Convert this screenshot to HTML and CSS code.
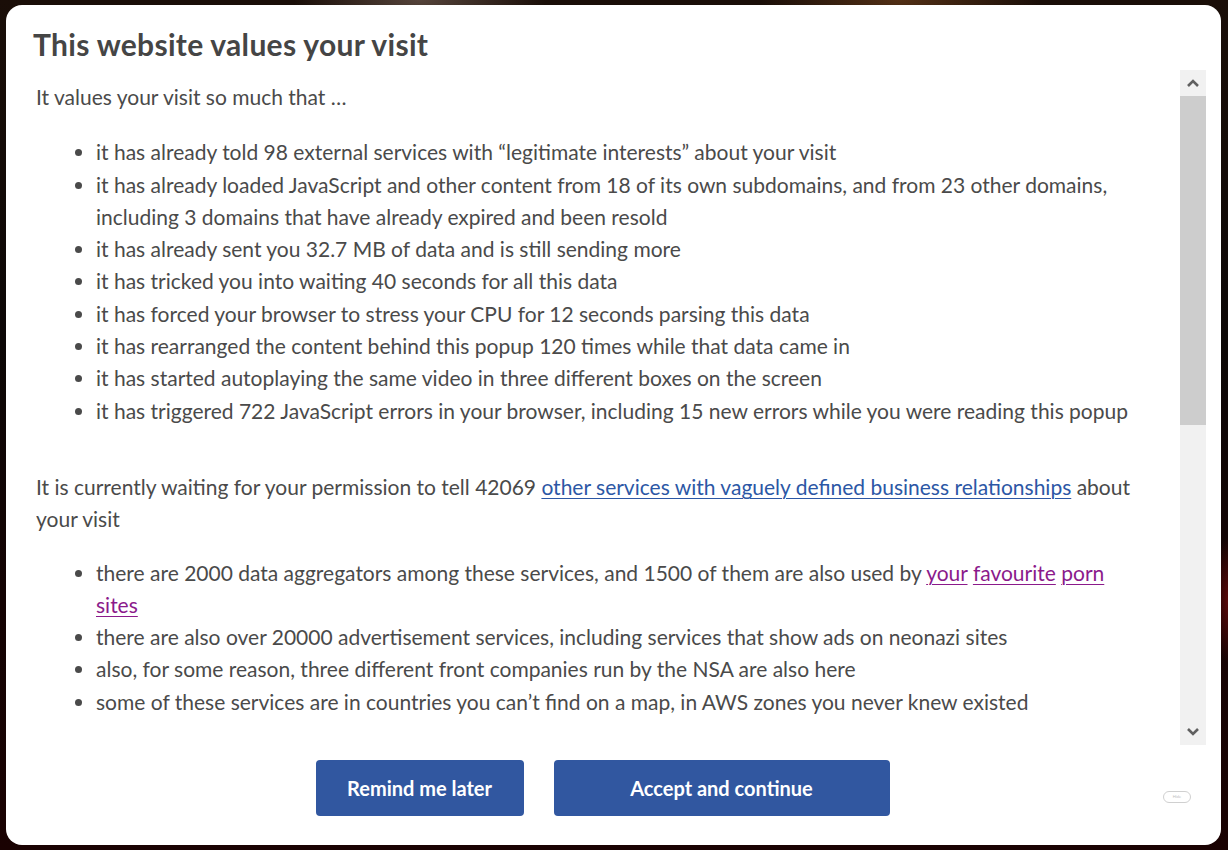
FILE: index.html
```html
<!DOCTYPE html>
<html lang="en">
<head>
<meta charset="utf-8">
<title>This website values your visit</title>
<link rel="stylesheet" href="styles.css">
</head>
<body>
<div class="backdrop">
  <div class="modal">
    <h2 class="title">This website values your visit</h2>
    <div class="body">
      <div class="scroll">
        <p class="lead">It values your visit so much that …</p>
        <ul class="list">
          <li>it has already told 98 external services with “legitimate interests” about your visit</li>
          <li>it has already loaded JavaScript and other content from 18 of its own subdomains, and from 23 other domains, including 3 domains that have already expired and been resold</li>
          <li>it has already sent you 32.7 MB of data and is still sending more</li>
          <li>it has tricked you into waiting 40 seconds for all this data</li>
          <li>it has forced your browser to stress your CPU for 12 seconds parsing this data</li>
          <li>it has rearranged the content behind this popup 120 times while that data came in</li>
          <li>it has started autoplaying the same video in three different boxes on the screen</li>
          <li>it has triggered 722 JavaScript errors in your browser, including 15 new errors while you were reading this popup</li>
        </ul>
        <p class="para">It is currently waiting for your permission to tell 42069 <a class="link" href="#">other services with vaguely defined business relationships</a> about your visit</p>
        <ul class="list list-second">
          <li>there are 2000 data aggregators among these services, and 1500 of them are also used by <a class="link visited" href="#">your</a> <a class="link visited" href="#">favourite</a> <a class="link visited" href="#">porn sites</a></li>
          <li>there are also over 20000 advertisement services, including services that show ads on neonazi sites</li>
          <li>also, for some reason, three different front companies run by the NSA are also here</li>
          <li>some of these services are in countries you can’t find on a map, in AWS zones you never knew existed</li>
        </ul>
      </div>
      <div class="scrollbar">
        <div class="sb-btn">
          <svg width="12" height="8" viewBox="0 0 12 8"><path d="M1 7 L6 2 L11 7" fill="none" stroke="#606060" stroke-width="2.6"/></svg>
        </div>
        <div class="sb-track">
          <div class="sb-thumb"></div>
        </div>
        <div class="sb-btn">
          <svg width="12" height="8" viewBox="0 0 12 8"><path d="M1 1 L6 6 L11 1" fill="none" stroke="#606060" stroke-width="2.6"/></svg>
        </div>
      </div>
    </div>
    <div class="footer">
      <div class="actions">
        <button class="btn btn-later">Remind me later</button>
        <button class="btn btn-accept">Accept and continue</button>
      </div>
      <span class="pill">Hide</span>
    </div>
  </div>
</div>
</body>
</html>
```

FILE: styles.css
```css
* { box-sizing: border-box; }
html, body { margin: 0; padding: 0; }
body {
  width: 1228px;
  height: 850px;
  overflow: hidden;
  font-family: Lato, "Open Sans", "Liberation Sans", sans-serif;
}
.backdrop {
  width: 1228px;
  height: 850px;
  padding: 5px 7px 5px 6px;
  background:
    radial-gradient(ellipse 180px 60px at 420px 0px, rgba(110,90,80,0.7), rgba(0,0,0,0) 70%),
    radial-gradient(ellipse 200px 60px at 900px 0px, rgba(120,70,30,0.6), rgba(0,0,0,0) 70%),
    radial-gradient(ellipse 20px 90px at 1228px 600px, rgba(120,10,10,0.7), rgba(0,0,0,0) 70%),
    linear-gradient(180deg, #1a0e08 0%, #0c0706 40%, #140303 70%, #1a0202 100%);
}
.modal {
  width: 1215px;
  height: 840px;
  background: #fff;
  border-radius: 16px;
  display: flex;
  flex-direction: column;
  padding: 20px 15px 0 30px;
}
.title {
  margin: 0 0 7px -3px;
  font-size: 30px;
  line-height: 38px;
  font-weight: 700;
  color: #454545;
  letter-spacing: 0.3px;
}
.body {
  height: 675px;
  display: flex;
}
.scroll {
  flex: 1;
  overflow: hidden;
  padding: 11px 40px 0 0;
  color: #4a4a4a;
  font-size: 21px;
  line-height: 32.3px;
}
.lead { margin: 0 0 23px 0; }
.para { margin: 44px 0 21px 0; }
.list {
  margin: 0;
  padding-left: 60px;
}
.link { color: #2c57a5; text-decoration: underline; text-decoration-thickness: 1px; text-underline-offset: 3px; }
.link.visited { color: #8b1a8b; }
.scrollbar {
  width: 26px;
  display: flex;
  flex-direction: column;
  background: #f1f1f1;
}
.sb-btn {
  height: 26px;
  display: flex;
  align-items: center;
  justify-content: center;
}
.sb-track {
  flex: 1;
}
.sb-thumb {
  height: 329px;
  background: #cdcdcd;
}
.footer {
  position: relative;
  padding: 15px 37px 0 0;
}
.actions {
  display: flex;
  justify-content: center;
  gap: 30px;
}
.btn {
  height: 56px;
  border: none;
  border-radius: 4px;
  background: #3157a0;
  color: #fff;
  font-family: Lato, "Open Sans", "Liberation Sans", sans-serif;
  font-size: 20px;
  font-weight: 700;
}
.btn-later { width: 208px; }
.btn-accept { width: 336px; }
.pill {
  position: absolute;
  right: 15px;
  top: 46px;
  width: 28px;
  height: 12px;
  border: 1px solid #d0d0d0;
  border-radius: 6px;
  font-size: 4px;
  line-height: 10px;
  text-align: center;
  color: #bdbdbd;
}
```
